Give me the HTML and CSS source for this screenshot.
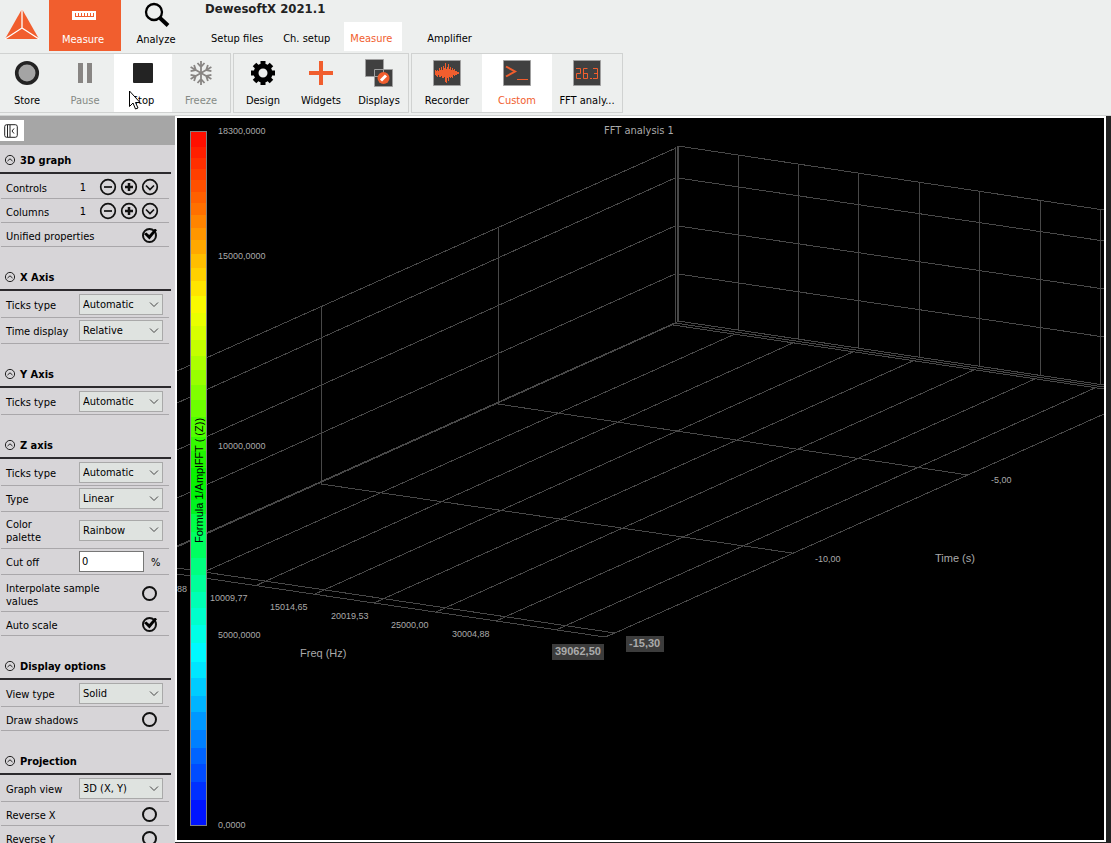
FILE: index.html
```
<!DOCTYPE html>
<html lang="en">
<head>
    <meta charset="utf-8">
    <title>DewesoftX 2021.1</title>
    <link rel="stylesheet" href="styles.css">
</head>
<body>
    <svg class="symbols" aria-hidden="true">
        <symbol id="minus" viewBox="0 0 18 18"><circle cx="9" cy="9" r="7.3"/><path d="M5 9h8"/></symbol>
        <symbol id="plus" viewBox="0 0 18 18"><circle cx="9" cy="9" r="7.3"/><path class="heavy" d="M5 9h8M9 5v8"/></symbol>
        <symbol id="down" viewBox="0 0 18 18"><circle cx="9" cy="9" r="7.3"/><path d="M5 7.5l4 4 4-4"/></symbol>
        <symbol id="fold" viewBox="0 0 12 12"><circle cx="6" cy="6" r="4.6"/><path d="M3.5 7L6 4.8 8.500 7"/></symbol>
    </svg>

    <header class="top">
        <svg class="logo" width="36" height="34" viewBox="0 0 36 34">
            <path fill="#f15e2e" d="M18 1L1 31h34z"/>
            <path fill="none" stroke="#fff" stroke-width="1.3" d="M18 1v19L1 31M18 20l17 11"/>
        </svg>
        <button class="app selected">
            <svg width="30" height="30" viewBox="0 0 30 30">
                <path fill="#fff" d="M4 11h24v9H4z"/>
                <path stroke="#f15e2e" d="M7.500 13v4M10.500 13v3M13.500 13v4M16.500 13v3M19.500 13v4M22.500 13v3M25.500 13v4M7 16.500h18"/>
            </svg>
            Measure
        </button>
        <button class="app">
            <svg width="30" height="30" viewBox="0 0 30 30">
                <circle cx="13" cy="12" r="8" fill="none" stroke="#000" stroke-width="2.300"/>
                <path stroke="#000" stroke-width="4" d="M19 18l8 7.500"/>
            </svg>
            Analyze
        </button>
        <div class="project">
            <h1>DewesoftX 2021.1</h1>
            <nav>
                <a href="#setup">Setup files</a>
                <a href="#channels">Ch. setup</a>
                <a href="#measure" class="current">Measure</a>
                <a href="#amplifier" class="apart">Amplifier</a>
            </nav>
        </div>
    </header>

    <div class="toolbar">
        <div class="group first">
            <button class="tool">
                <svg width="28" height="28" viewBox="0 0 28 28"><circle cx="14" cy="14" r="10.300" fill="#a4a4a4" stroke="#232323" stroke-width="3.600"/></svg>
                Store
            </button>
            <button class="tool" disabled>
                <svg width="28" height="28" viewBox="0 0 28 28"><path fill="#888583" d="M7 4h5v20H7zM16 4h5v20h-5z"/></svg>
                Pause
            </button>
            <button class="tool selected">
                <svg width="28" height="28" viewBox="0 0 28 28"><rect x="4" y="4" width="20" height="20" rx="1" fill="#232323"/></svg>
                <span>Stop</span>
                <svg class="pointer" width="13" height="20" viewBox="0 0 13 20"><path fill="#fff" stroke="#000" d="M1.500 1v15.500l3.500-3.500 2.500 6 2.500-1-2.500-5.500h4.500z"/></svg>
            </button>
            <button class="tool" disabled>
                <svg width="28" height="28" viewBox="0 0 28 28">
                    <g fill="none" stroke="#888583" stroke-width="1.800">
                        <path d="M14 2v24M10.500 4l3.500 4 3.500-4M10.500 24l3.500-4 3.500 4"/>
                        <path transform="rotate(60 14 14)" d="M14 2v24M10.500 4l3.500 4 3.500-4M10.500 24l3.500-4 3.500 4"/>
                        <path transform="rotate(120 14 14)" d="M14 2v24M10.500 4l3.500 4 3.500-4M10.500 24l3.500-4 3.500 4"/>
                    </g>
                </svg>
                Freeze
            </button>
        </div>
        <div class="group">
            <button class="tool">
                <svg width="28" height="28" viewBox="0 0 28 28">
                    <circle cx="14" cy="14" r="7" fill="none" stroke="#000" stroke-width="5"/>
                    <g stroke="#000" stroke-width="5">
                        <path d="M14 2v4M14 22v4M2 14h4M22 14h4"/>
                        <path transform="rotate(45 14 14)" d="M14 2v4M14 22v4M2 14h4M22 14h4"/>
                    </g>
                </svg>
                Design
            </button>
            <button class="tool">
                <svg width="28" height="28" viewBox="0 0 28 28"><path stroke="#f15e2e" stroke-width="4" d="M14 2v24M2 14h24"/></svg>
                Widgets
            </button>
            <button class="tool">
                <svg width="28" height="28" viewBox="0 0 28 28">
                    <path fill="#404040" stroke="#a0a0a0" d="M.5.5h18v17H.5zM9.500 10.500h18v17h-18z"/>
                    <circle cx="18.500" cy="19" r="6" fill="#f15e2e"/>
                    <path stroke="#fff" stroke-width="3" d="M16 21.500l5-5"/>
                </svg>
                Displays
            </button>
        </div>
        <div class="group wide">
            <button class="tool">
                <svg width="28" height="28" viewBox="0 0 28 28">
                    <path fill="#404040" stroke="#a0a0a0" d="M.5 1.500h27v25H.5z"/>
                    <path stroke="#f15e2e" d="M2.500 11v5M3.500 12v5M4.500 11v7M5.500 12v4M6.500 9v9M7.500 11v7M8.500 8v9M9.500 11v8M10.500 7v12M11.500 9v9M12.500 4v19M13.500 10v14M14.500 8v11M15.500 5v17M16.500 10v8M17.500 8v11M18.500 11v7M19.500 9v10M20.500 11v5M21.500 10v7M22.500 12v4M23.500 12v4M24.500 13v2M25.500 13v2"/>
                </svg>
                Recorder
            </button>
            <button class="tool selected">
                <svg width="28" height="28" viewBox="0 0 28 28">
                    <path fill="#404040" stroke="#a0a0a0" d="M.5 1.500h27v25H.5z"/>
                    <path fill="none" stroke="#f15e2e" stroke-width="2" d="M3 7.500l9 5-9 5"/>
                    <path stroke="#f15e2e" d="M14 20.500h11"/>
                </svg>
                Custom
            </button>
            <button class="tool">
                <svg width="28" height="28" viewBox="0 0 28 28">
                    <path fill="#404040" stroke="#a0a0a0" d="M.5 1.500h27v25H.5z"/>
                    <path fill="none" stroke="#f15e2e" d="M3 9.500h4.500v5h-4v5H8M14.500 9.500h-4v10h4v-5h-4M17 19.500h2M20 9.500h4.500v10H20M21 14.500h3"/>
                </svg>
                FFT analy...
            </button>
        </div>
    </div>

    <main>
        <aside>
            <div class="strip">
                <button aria-label="Hide properties">
                    <svg width="14" height="14" viewBox="0 0 14 14"><rect x=".7" y=".7" width="12.600" height="12.600" rx="2"/><path d="M3.500 1v12M6 1v12M10 4.500L8 7l2 2.500"/></svg>
                </button>
            </div>

            <section>
                <h2><svg><use href="#fold"/></svg>3D graph</h2>
                <div class="row">
                    <span>Controls</span><output>1</output>
                    <button aria-label="Fewer controls"><svg><use href="#minus"/></svg></button>
                    <button aria-label="More controls"><svg><use href="#plus"/></svg></button>
                    <button aria-label="Select control"><svg><use href="#down"/></svg></button>
                </div>
                <div class="row">
                    <span>Columns</span><output>1</output>
                    <button aria-label="Fewer columns"><svg><use href="#minus"/></svg></button>
                    <button aria-label="More columns"><svg><use href="#plus"/></svg></button>
                    <button aria-label="Select column"><svg><use href="#down"/></svg></button>
                </div>
                <label class="row"><span>Unified properties</span><input type="checkbox" checked></label>
            </section>

            <section>
                <h2><svg><use href="#fold"/></svg>X Axis</h2>
                <label class="row pick"><span>Ticks type</span><select><option>Automatic</option></select></label>
                <label class="row pick"><span>Time display</span><select><option>Relative</option></select></label>
            </section>

            <section>
                <h2><svg><use href="#fold"/></svg>Y Axis</h2>
                <label class="row pick"><span>Ticks type</span><select><option>Automatic</option></select></label>
            </section>

            <section>
                <h2><svg><use href="#fold"/></svg>Z axis</h2>
                <label class="row pick"><span>Ticks type</span><select><option>Automatic</option></select></label>
                <label class="row pick"><span>Type</span><select><option>Linear</option></select></label>
                <label class="row pick tall"><span>Color<br>palette</span><select><option>Rainbow</option></select></label>
                <label class="row pick"><span>Cut off</span><input type="text" value="0"><span class="unit">%</span></label>
                <label class="row tall"><span>Interpolate sample<br>values</span><input type="checkbox"></label>
                <label class="row"><span>Auto scale</span><input type="checkbox" checked></label>
            </section>

            <section>
                <h2><svg><use href="#fold"/></svg>Display options</h2>
                <label class="row pick"><span>View type</span><select><option>Solid</option></select></label>
                <label class="row"><span>Draw shadows</span><input type="checkbox"></label>
            </section>

            <section>
                <h2><svg><use href="#fold"/></svg>Projection</h2>
                <label class="row pick"><span>Graph view</span><select><option>3D (X, Y)</option></select></label>
                <label class="row"><span>Reverse X</span><input type="checkbox"></label>
                <label class="row"><span>Reverse Y</span><input type="checkbox"></label>
            </section>
        </aside>

        <div class="display">
            <svg class="plot" role="img" aria-label="FFT analysis 1">
                <g transform="translate(-177 -118)">
                    <g class="grid">
                        <!-- left wall -->
                        <path d="M676 148L177 371M675 178L177 403M675 226L177 450M675 274L177 498M677 322L177 546M674 324L177 547"/>
                        <path d="M675.5 147V324M677.5 146V322M678.5 146V322M498.5 228V404M321.5 307V484"/>
                        <!-- back wall -->
                        <path d="M678 146L1104 210M678 178L1104 241M678 226L1104 289M678 274L1104 337M678 321L1104 385"/>
                        <path d="M738.5 155V330M798.5 164V339M858.5 173V348M919.5 182V357M979.5 191V366M1040.5 200V375M1100.5 209V384"/>
                        <path d="M675 323L1104 387M673 325L1104 389"/>
                        <!-- floor -->
                        <path d="M735 334L195 576M795 342L255 586M855 351L315 594M915 360L374 603M976 369L436 612M1037 378L496 621M1097 387L556 630M1104 414L615 633L605 637"/>
                        <path d="M498 404L968 475M321 484L792 553M177 568L615 633M177 574L605 637"/>
                    </g>
                    <g id="scale"></g>
                    <rect class="frame" x="190.5" y="131.5" width="16" height="694"/>
                    <text class="channel" transform="translate(203 543) rotate(-90)">Formula 1/AmplFFT ( (Z))</text>
                    <text class="title" x="604" y="134">FFT analysis 1</text>
                    <g class="ticks">
                        <text x="218" y="134">18300,0000</text>
                        <text x="218" y="259">15000,0000</text>
                        <text x="218" y="449">10000,0000</text>
                        <text x="218" y="638">5000,0000</text>
                        <text x="218" y="828">0,0000</text>
                        <text x="177" y="592">88</text>
                        <text x="210" y="601">10009,77</text>
                        <text x="270" y="610">15014,65</text>
                        <text x="331" y="619">20019,53</text>
                        <text x="391" y="628">25000,00</text>
                        <text x="452" y="637">30004,88</text>
                        <text x="991" y="483">-5,00</text>
                        <text x="815" y="562">-10,00</text>
                    </g>
                    <g class="names">
                        <text x="300" y="657">Freq (Hz)</text>
                        <text x="935" y="562">Time (s)</text>
                    </g>
                    <g class="ends">
                        <rect x="552" y="644" width="52" height="16"/>
                        <rect x="626" y="636" width="38" height="16"/>
                        <text x="555" y="655">39062,50</text>
                        <text x="629" y="647">-15,30</text>
                    </g>
                </g>
            </svg>
        </div>
    </main>

    <script>
        // top edge and colour of every band, red at the top
        var bands = [
            [131, "#ff0f00"], [147, "#ff1f00"], [158, "#ff2f00"], [169, "#ff3f00"], [180, "#ff5000"],
            [192, "#ff6000"], [203, "#ff7000"], [215, "#ff8400"], [228, "#ff9600"], [240, "#ffa800"],
            [254, "#ffbe00"], [268, "#ffd000"], [281, "#ffe400"], [296, "#faf900"], [313, "#eaff00"],
            [326, "#d8ff00"], [340, "#c4ff00"], [356, "#acff00"], [370, "#98ff00"], [385, "#80ff00"],
            [400, "#6cff00"], [417, "#50ff00"], [437, "#34fa00"], [451, "#20f500"], [468, "#08f400"],
            [486, "#00f408"], [500, "#00f420"], [514, "#00ff48"], [532, "#00ff60"], [558, "#00ff80"],
            [575, "#00ff9a"], [592, "#00ffb4"], [608, "#00ffcc"], [625, "#00ffe6"], [643, "#00faff"],
            [662, "#00e6ff"], [678, "#00ccff"], [696, "#00b4ff"], [712, "#0098ff"], [730, "#0080ff"],
            [748, "#0064ff"], [764, "#004cff"], [782, "#0030ff"], [800, "#0014ff"], [826]
        ];
        var scale = document.querySelector("#scale");

        for (var i = 0; i < bands.length - 1; i++) {
            var rect = document.createElementNS("http://www.w3.org/2000/svg", "rect");
            rect.setAttribute("x", 190);
            rect.setAttribute("y", bands[i][0]);
            rect.setAttribute("width", 17);
            rect.setAttribute("height", bands[i + 1][0] - bands[i][0]);
            rect.setAttribute("fill", bands[i][1]);
            scale.appendChild(rect);
        }
    </script>
</body>
</html>
```

FILE: styles.css
```
* {
    box-sizing: border-box;
}

body {
    margin: 0;
    height: 100vh;
    display: flex;
    flex-direction: column;
    overflow: hidden;
    background: #edefee;
    color: #000;
    font-family: "DejaVu Sans Condensed", "Noto Sans", sans-serif;
    font-size: 11px;
    line-height: 13px;
}

button, input, select {
    font: inherit;
    color: inherit;
    margin: 0;
    padding: 0;
    border: 0;
    border-radius: 0;
    background: none;
}

h1, h2 {
    margin: 0;
}

.symbols {
    display: none;
}

/* header */
.top {
    display: flex;
    height: 53px;
    flex: none;
}

.logo {
    margin: 8px 9px 0 4px;
}

.app {
    width: 72px;
    height: 51px;
    padding-right: 2px;
    display: flex;
    flex-direction: column;
    align-items: center;
    gap: 3px;
}

.app.selected {
    padding-right: 4px;
    background: #f15e2e;
    color: #fff;
}

.project {
    padding: 2px 0 0 12px;
}

.project h1 {
    font-size: 13px;
    line-height: 14px;
    padding-bottom: 6px;
    color: #222;
}

.project nav {
    display: flex;
    gap: 8px;
}

.project a {
    padding: 10px 6px 6px;
    height: 29px;
    color: #000;
    text-decoration: none;
}

.project a.current {
    width: 58px;
    background: #fff;
    color: #f15e2e;
}

.project a.apart {
    margin-left: 11px;
}

.toolbar {
    display: flex;
    flex: none;
    gap: 2px;
    padding-bottom: 2px;
    border-bottom: 1px solid #d0d2d1;
}

.group {
    display: flex;
    border: 1px solid #d0d2d1;
}

.group.first {
    margin-left: -2px;
    border-left: 0;
}

.tool {
    width: 58px;
    height: 58px;
    padding-top: 5px;
    display: flex;
    flex-direction: column;
    align-items: center;
    gap: 7px;
    white-space: nowrap;
    position: relative;
}

.wide .tool {
    width: 70px;
}

.tool.selected {
    background: #fff;
}

.wide .selected {
    color: #f15e2e;
}

.tool:disabled {
    color: #858a85;
}

.pointer {
    position: absolute;
    left: 14px;
    top: 36px;
}

/* properties */
main {
    flex: 1;
    min-height: 0;
    display: flex;
    background: #222;
}

aside {
    width: 175px;
    flex: none;
    overflow: hidden;
    background: #d7d5d8;
}

.strip {
    height: 29px;
    padding-top: 4px;
    background: #a6a6a6;
}

.strip button {
    width: 24px;
    height: 21px;
    background: #fff;
    display: flex;
    align-items: center;
    padding-left: 4px;
}

.strip svg {
    fill: none;
    stroke: #222;
}

section {
    margin-bottom: 15px;
}

section h2 {
    display: flex;
    align-items: center;
    gap: 4px;
    height: 29px;
    margin: 0 4px 1px 0;
    padding: 3px 4px 0;
    border-bottom: 2px solid #2c2a2d;
    font-size: 11px;
}

h2 svg {
    width: 12px;
    height: 12px;
    fill: none;
    stroke: #222;
}

.row {
    display: flex;
    align-items: center;
    height: 24px;
    margin: 0 6px 0 1px;
    padding: 1px 12px 0 5px;
    border-bottom: 1px solid #a9a7aa;
}

.row > span {
    padding-top: 2px;
}

.row > span:first-child {
    flex: 1;
    white-space: nowrap;
}

.pick {
    height: 26px;
    padding: 0 6px 0 5px;
}

.tall {
    height: 37px;
}

.row output {
    margin-right: 10px;
}

.row button {
    width: 18px;
    height: 18px;
    margin-left: 3px;
}

.row button:last-child {
    margin-right: -2px;
}

.row button svg {
    display: block;
    width: 18px;
    height: 18px;
    fill: none;
    stroke: #111;
    stroke-width: 1.7;
}

.row .heavy,
.heavy {
    stroke-width: 2.5;
}

select {
    appearance: none;
    width: 84px;
    height: 21px;
    padding-left: 3px;
    border: 1px solid #a9a9a9;
    background: #dfe3e0 url("data:image/svg+xml,%3Csvg xmlns='http://www.w3.org/2000/svg' width='10' height='6'%3E%3Cpath d='M1 .5l4 4 4-4' fill='none' stroke='%23444'/%3E%3C/svg%3E") no-repeat right 3px center;
}

input[type="text"] {
    width: 65px;
    height: 21px;
    padding-left: 2px;
    border: 1px solid #777;
    background: #fff;
}

.unit {
    width: 19px;
    padding-left: 7px;
}

input[type="checkbox"] {
    appearance: none;
    position: relative;
    width: 15px;
    height: 15px;
    border: 2px solid #111;
    border-radius: 50%;
}

input[type="checkbox"]:checked::before {
    content: "";
    position: absolute;
    left: 0;
    top: -1px;
    width: 13px;
    height: 11px;
    background: #000;
    clip-path: polygon(0 50%, 18% 36%, 40% 58%, 85% 0, 100% 16%, 42% 100%);
}

/* 3D graph */
.display {
    flex: 1;
    min-width: 0;
    margin: 0 5px 1px 0;
    border: 2px solid #fff;
    background: #000;
}

.plot {
    display: block;
    width: 100%;
    height: 100%;
    font-family: "Liberation Sans", Arial, sans-serif;
    fill: #aaa;
}

.grid {
    fill: none;
    stroke: #484848;
    shape-rendering: crispEdges;
}

.frame {
    fill: none;
    stroke: #808080;
}

.channel {
    font-size: 11px;
    fill: #000;
}

.title {
    font-family: "DejaVu Sans Condensed", "Noto Sans", sans-serif;
    font-size: 11px;
}

.ticks {
    font-size: 9px;
}

.names {
    font-size: 11px;
}

.ends {
    font-size: 11px;
    font-weight: bold;
}

.ends rect {
    fill: #3c3c3c;
}
```
